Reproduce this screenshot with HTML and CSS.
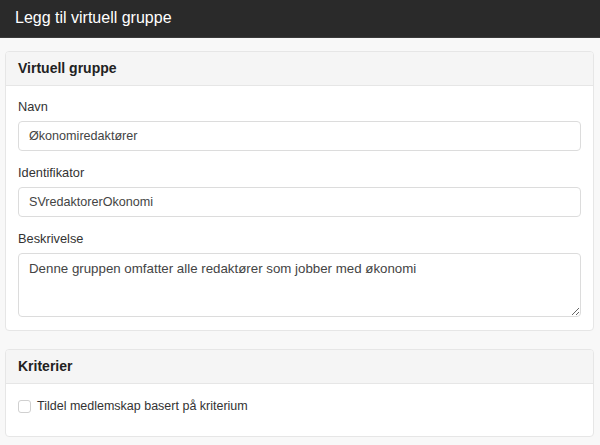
FILE: index.html
```html
<!DOCTYPE html>
<html>
<head>
<meta charset="utf-8">
<link rel="stylesheet" href="styles.css">
</head>
<body>
<header class="topbar">Legg til virtuell gruppe</header>
<main class="content">
  <section class="panel">
    <div class="panel-heading">Virtuell gruppe</div>
    <div class="panel-body">
      <div class="field">
        <label class="label">Navn</label>
        <input class="input" type="text" value="Økonomiredaktører">
      </div>
      <div class="field">
        <label class="label">Identifikator</label>
        <input class="input" type="text" value="SVredaktorerOkonomi">
      </div>
      <div class="field">
        <label class="label">Beskrivelse</label>
        <textarea class="textarea">Denne gruppen omfatter alle redaktører som jobber med økonomi</textarea>
      </div>
    </div>
  </section>
  <section class="panel">
    <div class="panel-heading">Kriterier</div>
    <div class="panel-body panel-body-crit">
      <label class="check"><span class="box"></span>Tildel medlemskap basert på kriterium</label>
    </div>
  </section>
</main>
</body>
</html>
```

FILE: styles.css
```css
* { box-sizing: border-box; }
html, body { margin: 0; padding: 0; }
body {
  background: #f8f8f8;
  font-family: "Liberation Sans", Arial, sans-serif;
  color: #333;
  font-size: 13px;
}
.topbar {
  height: 38px;
  background: #2a2a2a;
  color: #fff;
  font-size: 16px;
  line-height: 36px;
  padding-left: 15px;
  border-bottom: 1px solid #3a3a3a;
}
.content {
  padding: 13px 6px 0 5px;
  display: flex;
  flex-direction: column;
  gap: 18px;
}
.panel {
  background: #fff;
  border: 1px solid #e6e6e6;
  border-radius: 4px;
  overflow: hidden;
}
.panel-heading {
  background: #f5f5f5;
  border-bottom: 1px solid #e6e6e6;
  height: 34px;
  line-height: 33px;
  padding: 0 12px;
  font-size: 14px;
  font-weight: bold;
  color: #222;
}
.panel-body {
  padding: 11px 12px 13px;
  display: flex;
  flex-direction: column;
  gap: 12px;
}
.field { display: flex; flex-direction: column; gap: 4px; }
.label { line-height: 20px; font-size: 12.8px; color: #333; }
.input, .textarea {
  font-family: "Liberation Sans", Arial, sans-serif;
  font-size: 12.6px;
  color: #444;
  border: 1px solid #dcdcdc;
  border-radius: 4px;
  background: #fff;
  padding: 0 10px;
  width: 100%;
  margin: 0;
  outline: none;
}
.input { height: 30px; }
.textarea {
  height: 64px;
  padding: 6px 10px;
  font-size: 13.3px;
  line-height: 18px;
  resize: vertical;
  display: block;
}
.panel-body-crit { padding: 12px 12px 20px; }
.check {
  display: flex;
  align-items: center;
  line-height: 20px;
  font-size: 12.5px;
  color: #333;
}
.box {
  width: 13px;
  height: 13px;
  border: 1px solid #d0d0d0;
  border-radius: 3px;
  background: #fff;
  margin-right: 6px;
  flex: none;
}
```
